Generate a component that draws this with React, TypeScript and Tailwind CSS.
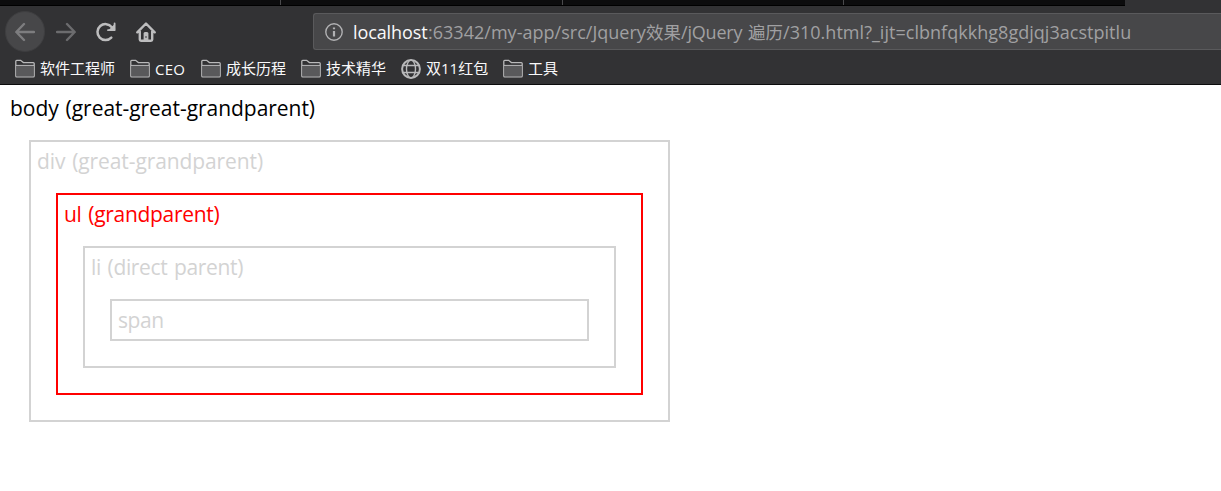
import type { ReactNode } from "react";

const bookmarks = [
  { label: "软件工程师", icon: "folder", width: "w-[75px] pb-0.5" },
  { label: "CEO", icon: "folder", width: "w-[31px] text-[15px] tracking-[0.2px]" },
  { label: "成长历程", icon: "folder", width: "w-[60px] pb-0.5" },
  { label: "技术精华", icon: "folder", width: "w-[60px] pb-0.5" },
  { label: "双11红包", icon: "globe", width: "w-[62px] pb-0.5" },
  { label: "工具", icon: "folder", width: "w-[30px] pb-0.5" }
];

function FolderIcon() {
  return (
    <svg className="h-5 w-5 shrink-0" viewBox="0 0 20 20" fill="none" stroke="#b9b9ba" strokeWidth="1.3">
      <path d="M.8 17V2.2Q.8 1.3 1.7 1.3H5.6L8.4 3.6H18.3Q19.2 3.6 19.2 4.5V17Q19.2 17.9 18.3 17.9H1.7Q.8 17.9.8 17Z" />
      <path d="M1.4 6.4H18.6V17.3H1.4Z" fill="#59595b" stroke="none" />
      <path d="M1 6.4H19" strokeWidth="1" />
    </svg>
  );
}

function GlobeIcon() {
  return (
    <svg className="h-5 w-5 shrink-0" viewBox="0 0 20 20" fill="none" stroke="#b9b9ba" strokeWidth="1.4">
      <circle cx="10" cy="10" r="8.9" strokeWidth="2" />
      <ellipse cx="10" cy="10" rx="4.5" ry="8.9" />
      <path d="M1.5 6.5H18.5M1.5 13.5H18.5" />
    </svg>
  );
}

function NavButtons() {
  return (
    <div className="flex w-[313px] shrink-0 items-center pl-[5px]">
      <span className="flex h-[41px] w-10 items-center justify-center rounded-full border border-[#3e3e40] bg-[#474749]">
        <svg className="h-5 w-5" viewBox="0 0 20 20" fill="none" stroke="#7d7d7f" strokeWidth="2.4" strokeLinecap="round" strokeLinejoin="round">
          <path d="M19 10H1.5M9 2L1.3 10L9 18" />
        </svg>
      </span>
      <svg className="ml-[11px] h-5 w-5" viewBox="0 0 20 20" fill="none" stroke="#6c6c6e" strokeWidth="2.4" strokeLinecap="round" strokeLinejoin="round">
        <path d="M1 10H18.5M11 2L18.7 10L11 18" />
      </svg>
      <svg className="ml-5 h-5 w-5" viewBox="0 0 20 20" fill="none" stroke="#bdbdbe" strokeWidth="2.5" strokeLinecap="round">
        <path d="M15.3 15.6A8 8 0 1 1 15.8 5.2L18 7.2" />
        <path d="M18.6 1.5V8.2H12" strokeWidth="1.8" strokeLinejoin="round" />
        <path d="M18.6 2V8.2H12.4Z" fill="#bdbdbe" stroke="none" />
      </svg>
      <svg className="ml-5 h-5 w-5" viewBox="0 0 20 20" fill="none" stroke="#bdbdbe" strokeWidth="2.4" strokeLinecap="round" strokeLinejoin="round">
        <path d="M1.3 10.3L10 1.5L18.7 10.3M3.8 9.5V17.5Q3.8 18.7 5 18.7H15Q16.2 18.7 16.2 17.5V9.5" />
        <path d="M7.6 18.7V11.5Q7.6 10 9 10H11Q12.4 10 12.4 11.5V18.7Z" fill="#bdbdbe" stroke="none" />
        <path d="M10 14.2V15.8" stroke="#323234" strokeWidth="1.2" strokeLinecap="butt" />
      </svg>
    </div>
  );
}

function AddressBar() {
  return (
    <div className="flex h-[37px] flex-1 items-center overflow-hidden rounded-l-[3px] border border-r-0 border-[#5a5a5c] bg-[#474749] pl-[11px] text-[18px] whitespace-pre text-[#a0a0a2]">
      <svg className="mr-[10px] h-[18px] w-[18px] shrink-0" viewBox="0 0 18 18" fill="none" stroke="#b1b1b3" strokeWidth="1.4">
        <circle cx="9" cy="9" r="8.2" />
        <path d="M9 8V13.4M9 4.5V6.3" strokeWidth="2.2" />
      </svg>
      <div className="flex items-center pt-0.5">
        <span className="w-[75px] shrink-0 tracking-[-0.1px] text-[#f9f9fa]">localhost</span>
        <span className="w-[218px] shrink-0 tracking-[0.02px]">:63342/my-app/src/Jquery</span>
        <span className="w-[35px] shrink-0 text-[17.5px]">效果</span>
        <span className="w-[67px] shrink-0 tracking-[-0.2px]">/jQuery </span>
        <span className="w-[35px] shrink-0 text-[17.5px]">遍历</span>
        <span className="tracking-[0.03px]">/310.html?_ijt=clbnfqkkhg8gdjqj3acstpitlu</span>
      </div>
    </div>
  );
}

function Box({ label, className, tracking = "", children }: { label: string; className: string; tracking?: string; children?: ReactNode }) {
  return (
    <div className={`border-2 px-[6px] pt-[5px] ${className}`}>
      <div className={`h-[27px] leading-[29px] ${tracking}`}>{label}</div>
      {children && <div className="mx-[19px] mt-[19px] mb-[25px]">{children}</div>}
    </div>
  );
}

export default function App() {
  return (
    <div className="h-[491px] w-[1221px] overflow-hidden bg-white font-['Open_Sans','Noto_Sans_CJK_SC',sans-serif]">
      <header className="h-[85px] border-b border-[#0c0c0d] bg-[#323234]">
        <div className="flex h-[6px] w-[1125px] border-b border-black bg-[#0c0c0d]">
          <div className="w-[281px] border-r border-[#4a4a4c]" />
          <div className="w-[282px] border-r border-[#4a4a4c]" />
          <div className="w-[281px] border-r border-[#4a4a4c]" />
        </div>
        <div className="flex h-[51px] items-center">
          <NavButtons />
          <AddressBar />
        </div>
        <nav className="flex h-6 items-center gap-[15px] pl-[15px] text-[15px] text-[#f9f9fa]">
          {bookmarks.map((item) => (
            <div key={item.label} className="flex items-center gap-[5px]">
              {item.icon === "globe" ? <GlobeIcon /> : <FolderIcon />}
              <span className={`${item.width} whitespace-nowrap`}>{item.label}</span>
            </div>
          ))}
        </nav>
      </header>

      <main className="text-[21px] [word-spacing:1.5px] text-[#d3d3d3]">
        <div className="h-[55px] pt-2 pl-[10px] leading-[31px] tracking-[-0.04px] text-black">body (great-great-grandparent)</div>
        <div className="ml-[29px] w-[641px]">
          <Box label="div (great-grandparent)" className="border-[#d3d3d3]" tracking="tracking-[-0.1px]">
            <Box label="ul (grandparent)" className="border-[#ff0000] text-[#ff0000]" tracking="tracking-[-0.3px]">
              <Box label="li (direct parent)" className="border-[#d3d3d3] text-[#d3d3d3]" tracking="tracking-[-0.34px]">
                <Box label="span" className="h-[42px] border-[#d3d3d3]" tracking="tracking-[-0.4px]" />
              </Box>
            </Box>
          </Box>
        </div>
      </main>
    </div>
  );
}
